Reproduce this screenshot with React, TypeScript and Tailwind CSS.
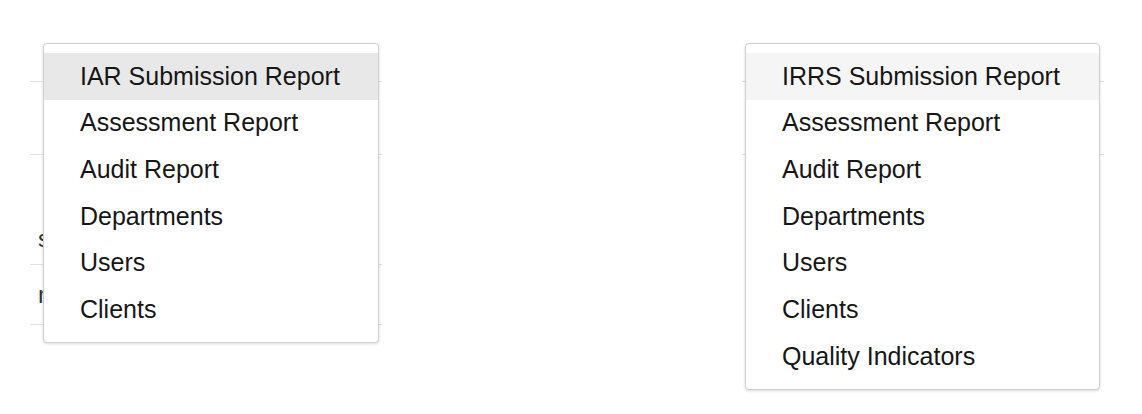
import React from "react";

const leftItems = [
  "IAR Submission Report",
  "Assessment Report",
  "Audit Report",
  "Departments",
  "Users",
  "Clients",
];

const rightItems = [
  "IRRS Submission Report",
  "Assessment Report",
  "Audit Report",
  "Departments",
  "Users",
  "Clients",
  "Quality Indicators",
];

function Menu({ items, active, className }: { items: string[]; active: string; className: string }) {
  return (
    <div
      className={
        "absolute top-[43px] bg-white border border-[#cfcfcf] rounded-[4px] shadow-[0_1px_3px_rgba(0,0,0,0.15)] py-[9px] " +
        className
      }
    >
      {items.map((it, i) => (
        <div
          key={it}
          className={
            "h-[46.7px] flex items-center pl-[36px] text-[25px] text-[#161616] whitespace-nowrap " +
            (i === 0 ? active : "")
          }
        >
          {it}
        </div>
      ))}
    </div>
  );
}

export default function App() {
  return (
    <div
      className="relative w-[1142px] h-[414px] bg-white overflow-hidden"
      style={{ fontFamily: '"Liberation Sans", Arial, sans-serif' }}
    >
      <div className="flex">
        {/* left background table */}
        <div className="ml-[30px] w-[352px] flex flex-col text-[24px] leading-[24px] text-[#333]">
          <div className="h-[82px] border-b border-[#e0e0e0]" />
          <div className="h-[73px] border-b border-[#e0e0e0]" />
          <div className="h-[110px] border-b border-[#e0e0e0] pt-[72px] pl-[8px]">s</div>
          <div className="h-[60px] border-b border-[#e0e0e0] pt-[18px] pl-[8px]">n</div>
        </div>
        {/* right background table */}
        <div className="ml-[360px] w-[362px] flex flex-col">
          <div className="h-[82px] border-b border-[#e0e0e0]" />
          <div className="h-[73px] border-b border-[#e0e0e0]" />
        </div>
      </div>

      <Menu items={leftItems} active="bg-[#e8e8e8]" className="left-[43px] w-[336px]" />
      <Menu items={rightItems} active="bg-[#f5f5f5]" className="left-[745px] w-[355px]" />
    </div>
  );
}
